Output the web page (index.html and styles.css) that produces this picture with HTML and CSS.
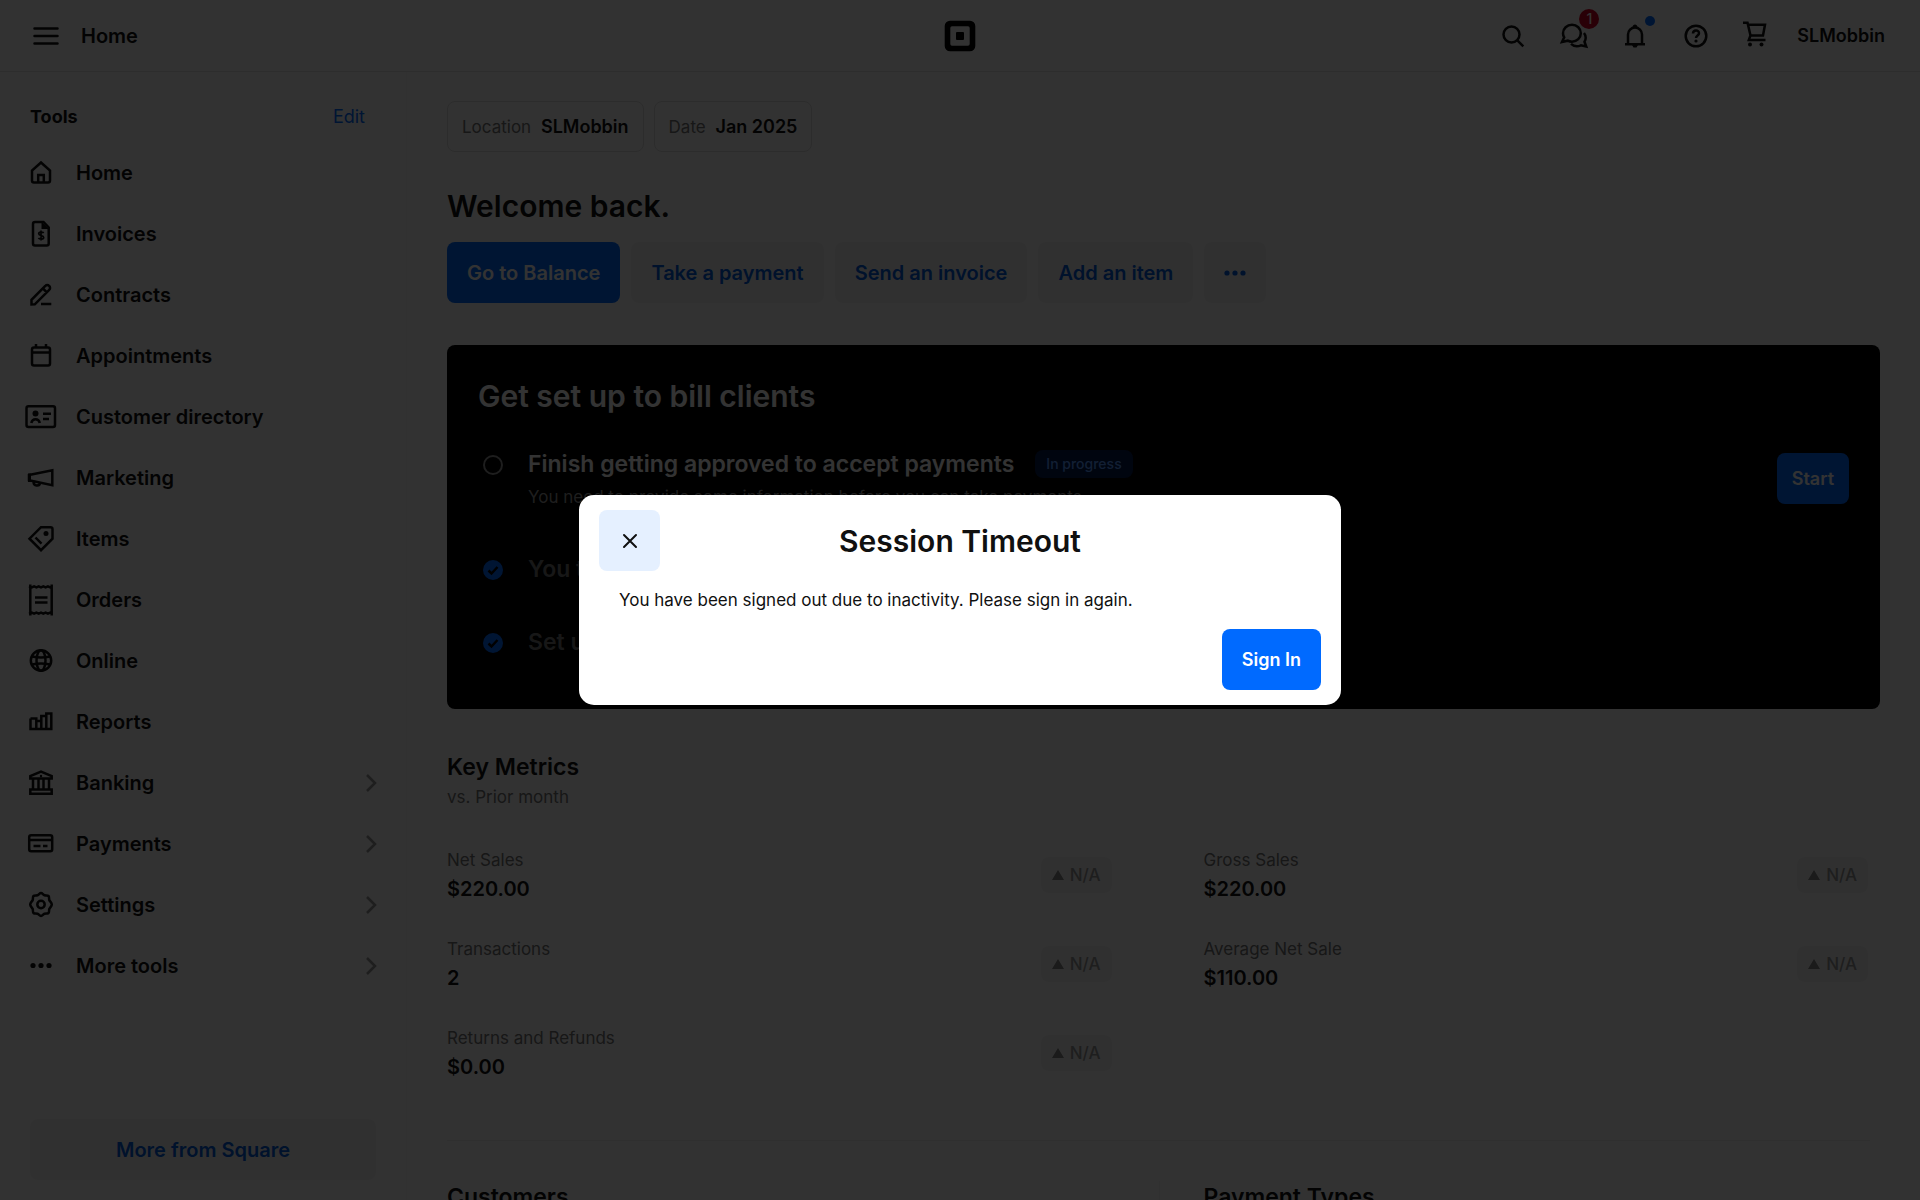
FILE: index.html
```html
<!DOCTYPE html>
<html lang="en">
<head>
  <meta charset="UTF-8" />
  <meta name="viewport" content="width=device-width, initial-scale=1.0" />
  <title>Home</title>
  <link rel="stylesheet" href="styles.css">
</head>
<body>
  <header class="topbar">
    <div class="topbar-left">
      <button class="icon-btn menu-btn" type="button" aria-label="Menu">
        <svg class="icon" viewBox="0 0 32 32"><path d="M4.5 8.5h23M4.5 16h23M4.5 23.5h23" stroke-linecap="round"/></svg>
      </button>
      <span class="page-name">Home</span>
    </div>

    <a class="logo" href="#" aria-label="Square">
      <svg width="32" height="32" viewBox="0 0 32 32"><path fill-rule="evenodd" d="M6 .7h20A5.3 5.3 0 0 1 31.3 6v20a5.3 5.3 0 0 1-5.3 5.3H6A5.3 5.3 0 0 1 .7 26V6A5.3 5.3 0 0 1 6 .7zM8 6.3A1.7 1.7 0 0 0 6.3 8v16A1.7 1.7 0 0 0 8 25.7h16a1.7 1.7 0 0 0 1.7-1.7V8A1.7 1.7 0 0 0 24 6.3zM13 12h6a1 1 0 0 1 1 1v6a1 1 0 0 1-1 1h-6a1 1 0 0 1-1-1v-6a1 1 0 0 1 1-1z"/></svg>
    </a>

    <div class="topbar-right">
      <button class="icon-btn" type="button" aria-label="Search">
        <svg class="icon" viewBox="0 0 32 32"><circle cx="14.5" cy="14.5" r="8"/><path d="M20.3 20.3l6 6"/></svg>
      </button>
      <button class="icon-btn" type="button" aria-label="Messages">
        <svg class="icon" viewBox="0 0 32 32"><path d="M14 4.8c5 0 8.8 3.7 8.8 8.400S19 21.700 14 21.700c-1.600 0-3-.3-4.200-1L4 22l2.200-4.600C5.400 16 5 14.600 5 13.200c0-4.700 4-8.400 9-8.400z"/><path d="M26 13c1.200 1.500 1.700 3 1.700 4.800 0 1.500-.4 2.800-1.200 4l1.700 4.700-5.200-1.200c-3.500 1.600-7.500.8-10-1.500"/></svg>
        <span class="count">1</span>
      </button>
      <button class="icon-btn" type="button" aria-label="Notifications">
        <svg class="icon" viewBox="0 0 32 32"><path d="M6 24.2h20M9 24v-9.500a7 7 0 0 1 14 0V24"/><path class="solid" d="M13 25h6l-1.500 2.500h-3zM13.500 7.500c0-4 5-4 5 0z"/></svg>
        <span class="dot"></span>
      </button>
      <button class="icon-btn" type="button" aria-label="Help">
        <svg class="icon" viewBox="0 0 32 32"><circle cx="16" cy="16" r="10.3"/><path d="M13 13.5c0-4 6-4 6-.3 0 2.300-3 2.300-3 4.800"/><circle class="solid" cx="16" cy="21" r="1.6"/></svg>
      </button>
      <button class="icon-btn" type="button" aria-label="Orders cart">
        <svg class="icon" viewBox="0 0 32 32"><path d="M2 2.800h4.500L9.500 15.500 7.800 20H24.500M7 4.800h17l-2 10.700H9.500"/><circle class="solid" cx="9" cy="24.5" r="2"/><circle class="solid" cx="20.5" cy="24.5" r="2"/></svg>
      </button>
      <a class="account" href="#">SLMobbin</a>
    </div>
  </header>

  <div class="shell">
    <aside class="sidebar">
      <div class="tools-head">
        <strong>Tools</strong>
        <a href="#">Edit</a>
      </div>
      <nav class="tools">
        <a class="tool" href="#">
          <svg class="icon" viewBox="0 0 32 32"><path d="M16 5.5l9 8v10a2 2 0 0 1-2 2H9a2 2 0 0 1-2-2v-10z"/><path d="M13.2 25v-7h5.6v7"/></svg>
          <span>Home</span>
        </a>
        <a class="tool" href="#">
          <svg class="icon" viewBox="0 0 32 32"><path d="M10 4h8.500l5.200 5.500V25.500a2 2 0 0 1-2 2H10a2 2 0 0 1-2-2V6a2 2 0 0 1 2-2z"/><path class="solid" d="M16.500 3.500l7.500 7.500h-7.500z"/><path class="thin" d="M18.700 15c-1-1.300-5-1.200-5 .8 0 2.300 5 1.200 5 3.600 0 2-4 2.200-5.300.6M16 12.500v10"/></svg>
          <span>Invoices</span>
        </a>
        <a class="tool" href="#">
          <svg class="icon" viewBox="0 0 32 32"><path d="M6.5 25.500v-4.700L20.300 7a2.600 2.600 0 0 1 3.900 0 2.600 2.600 0 0 1 0 3.900L9.800 25.300zM18 9.500l3.800 3.800M16 25h10.300"/></svg>
          <span>Contracts</span>
        </a>
        <a class="tool" href="#">
          <svg class="icon" viewBox="0 0 32 32"><path d="M9 7.5h14a2 2 0 0 1 2 2v14a2 2 0 0 1-2 2H9a2 2 0 0 1-2-2v-14a2 2 0 0 1 2-2zM7 12.500h18M11 4v4M21 4v4"/></svg>
          <span>Appointments</span>
        </a>
        <a class="tool" href="#">
          <svg class="icon" viewBox="0 0 32 32"><rect x="1.5" y="5.2" width="28.5" height="20.8" rx="2"/><path d="M18 12.700h8M18 18h6M6.300 22c1-5 7.500-5 8.500 0"/><circle class="solid" cx="10.5" cy="12.5" r="3"/></svg>
          <span>Customer directory</span>
        </a>
        <a class="tool" href="#">
          <svg class="icon" viewBox="0 0 32 32"><path d="M4 13l23.300-4.700v15L4 18.300z"/><path class="solid" d="M3 11.500h3v8.500H3z"/><path d="M8.500 19.500c0 5 6 5 6.500 1.500"/></svg>
          <span>Marketing</span>
        </a>
        <a class="tool" href="#">
          <svg class="icon" viewBox="0 0 32 32"><path d="M16 4.200h9.500a2 2 0 0 1 2 2v9.500L16 27.200 4.500 15.700zM10.500 14.500l6 6.200"/><circle class="solid" cx="21" cy="10.5" r="2.5"/></svg>
          <span>Items</span>
        </a>
        <a class="tool" href="#">
          <svg class="icon" viewBox="0 0 32 32"><path d="M5.300.5v31M26.700.5v31M4 2.300l2.800 1 2.300-1 2.300 1 2.300-1 2.300 1 2.300-1 2.300 1 2.300-1 2.300 1 2-1M4 29.700l2.800-1 2.300 1 2.300-1 2.300 1 2.300-1 2.300 1 2.300-1 2.300 1 2.300-1 2 1M10 13.500h12.500M10 18.500h12.500"/></svg>
          <span>Orders</span>
        </a>
        <a class="tool" href="#">
          <svg class="icon" viewBox="0 0 32 32"><circle cx="16" cy="15.5" r="10.2"/><ellipse cx="16" cy="15.5" rx="4.5" ry="10.2"/><path d="M7 11.500q9 2 18 0M7 19.500q9-2 18 0"/></svg>
          <span>Online</span>
        </a>
        <a class="tool" href="#">
          <svg class="icon" viewBox="0 0 32 32"><path d="M5.500 12.500h5.800V23M11.300 15h5v8M5.500 12.500V23h20.800V7.500h-5V23M16.300 23V10h5"/></svg>
          <span>Reports</span>
        </a>
        <a class="tool" href="#">
          <svg class="icon" viewBox="0 0 32 32"><path d="M5.300 11.500V9L16 4.500 26.700 9v2.500zM5.300 22.500h21.400v4.200H5.300zM8 12v10M13.500 12v10M18.500 12v10M24 12v10"/><circle class="solid" cx="16" cy="9" r="1.2"/></svg>
          <span>Banking</span>
          <svg class="chevron" viewBox="0 0 12 18"><path d="M2 1l8 8-8 8"/></svg>
        </a>
        <a class="tool" href="#">
          <svg class="icon" viewBox="0 0 32 32"><rect x="4.2" y="7.2" width="23" height="16" rx="2"/><path d="M4 12h23M8.500 18h7M18 18h4.500"/></svg>
          <span>Payments</span>
          <svg class="chevron" viewBox="0 0 12 18"><path d="M2 1l8 8-8 8"/></svg>
        </a>
        <a class="tool" href="#">
          <svg class="icon" viewBox="0 0 32 32"><path d="M16 4c1.500 0 2 1.700 3.500 2.200s3-.2 4 .8.300 2.500.8 4 2.500 2.500 2.500 4.500-2 3-2.500 4.500.2 3-.8 4-2.500.3-4 .8-2 2.200-3.500 2.200-2-1.700-3.500-2.200-3 .2-4-.8-.3-2.500-.8-4-2.500-2.500-2.500-4.500 2-3 2.500-4.500-.2-3 .8-4 2.500-.3 4-.8S14.500 4 16 4z"/><circle cx="16" cy="15.5" r="3.7"/></svg>
          <span>Settings</span>
          <svg class="chevron" viewBox="0 0 12 18"><path d="M2 1l8 8-8 8"/></svg>
        </a>
        <a class="tool" href="#">
          <svg class="icon" viewBox="0 0 32 32"><g class="solid"><circle cx="8" cy="15.5" r="2.6"/><circle cx="16" cy="15.5" r="2.6"/><circle cx="24" cy="15.5" r="2.6"/></g></svg>
          <span>More tools</span>
          <svg class="chevron" viewBox="0 0 12 18"><path d="M2 1l8 8-8 8"/></svg>
        </a>
      </nav>
      <button class="btn sidebar-more" type="button">More from Square</button>
    </aside>

    <main class="content">
      <div class="filters">
        <button class="filter" type="button"><span>Location</span> <b>SLMobbin</b></button>
        <button class="filter" type="button"><span>Date</span> <b>Jan 2025</b></button>
      </div>

      <h1 class="welcome">Welcome back.</h1>
      <div class="actions">
        <button class="btn primary" type="button">Go to Balance</button>
        <button class="btn" type="button">Take a payment</button>
        <button class="btn" type="button">Send an invoice</button>
        <button class="btn" type="button">Add an item</button>
        <button class="btn more" type="button" aria-label="More actions">
          <svg width="22" height="6" viewBox="0 0 22 6"><circle cx="3" cy="3" r="2.6"/><circle cx="11" cy="3" r="2.6"/><circle cx="19" cy="3" r="2.6"/></svg>
        </button>
      </div>

      <section class="setup">
        <h2>Get set up to bill clients</h2>
        <div class="step current">
          <svg class="step-mark" viewBox="0 0 22 22"><circle class="ring" cx="11" cy="11" r="9"/></svg>
          <div class="step-text">
            <div class="step-title"><h3>Finish getting approved to accept payments</h3><span class="status">In progress</span></div>
            <p>You need to provide some information before you can take payments.</p>
          </div>
          <button class="btn primary small" type="button">Start</button>
        </div>
        <div class="step done">
          <svg class="step-mark" viewBox="0 0 22 22"><circle cx="11" cy="11" r="10"/><path d="M6.500 11.500l3 3 6-6.500"/></svg>
          <h3>You told us about your business</h3>
        </div>
        <div class="step done">
          <svg class="step-mark" viewBox="0 0 22 22"><circle cx="11" cy="11" r="10"/><path d="M6.500 11.500l3 3 6-6.500"/></svg>
          <h3>Set up your first invoice</h3>
        </div>
      </section>

      <section class="metrics">
        <h3>Key Metrics</h3>
        <p class="muted">vs. Prior month</p>
        <div class="metric-grid">
          <div class="metric">
            <div><span class="muted">Net Sales</span><b>$220.00</b></div>
            <span class="change"><i class="up"></i>N/A</span>
          </div>
          <div class="metric">
            <div><span class="muted">Gross Sales</span><b>$220.00</b></div>
            <span class="change"><i class="up"></i>N/A</span>
          </div>
          <div class="metric">
            <div><span class="muted">Transactions</span><b>2</b></div>
            <span class="change"><i class="up"></i>N/A</span>
          </div>
          <div class="metric">
            <div><span class="muted">Average Net Sale</span><b>$110.00</b></div>
            <span class="change"><i class="up"></i>N/A</span>
          </div>
          <div class="metric">
            <div><span class="muted">Returns and Refunds</span><b>$0.00</b></div>
            <span class="change"><i class="up"></i>N/A</span>
          </div>
        </div>
      </section>

      <section class="reports">
        <h3>Customers</h3>
        <h3>Payment Types</h3>
      </section>
    </main>
  </div>

  <div class="overlay">
    <div class="modal" role="dialog" aria-modal="true" aria-labelledby="modal-title">
      <div class="modal-head">
        <button class="close" type="button" aria-label="Close">
          <svg width="18" height="18" viewBox="0 0 18 18"><path d="M3 3l12 12M15 3L3 15"/></svg>
        </button>
        <h2 id="modal-title">Session Timeout</h2>
      </div>
      <p>You have been signed out due to inactivity. Please sign in again.</p>
      <div class="modal-foot">
        <button class="btn primary signin" type="button">Sign In</button>
      </div>
    </div>
  </div>
</body>
</html>
```
FILE: styles.css
```css
* {
  box-sizing: border-box;
}

body {
  display: flex;
  flex-direction: column;
  height: 100vh;
  margin: 0;
  overflow: hidden;
  background: #fafafa;
  color: #101010;
  font-family: Inter, "Liberation Sans", sans-serif;
  font-size: 17px;
  line-height: 24px;
}

h1, h2, h3, p {
  margin: 0;
}

h1, h2 {
  font-size: 30px;
  line-height: 40px;
  font-weight: 600;
}

h3 {
  font-size: 23px;
  line-height: 32px;
  font-weight: 600;
}

a {
  color: #006aff;
  text-decoration: none;
}

button {
  font-family: inherit;
  cursor: pointer;
}

.icon {
  width: 32px;
  height: 32px;
  flex: none;
  fill: none;
  stroke: #101010;
  stroke-width: 2.5;
}

.icon .solid {
  fill: #101010;
  stroke: none;
}

.icon .thin {
  stroke-width: 1.7;
}

/* Top bar */
.topbar {
  display: grid;
  grid-template-columns: 1fr auto 1fr;
  align-items: center;
  flex: none;
  height: 72px;
  border-bottom: 1px solid #e0e0e0;
}

.topbar-left {
  display: flex;
  align-items: center;
  padding-left: 15px;
}

.page-name {
  font-size: 20px;
  font-weight: 600;
  padding-left: 5px;
}

.logo {
  display: flex;
}

.topbar-right {
  display: flex;
  align-items: center;
  justify-content: flex-end;
  padding-right: 35px;
}

.icon-btn {
  position: relative;
  display: flex;
  align-items: center;
  justify-content: center;
  width: 61px;
  height: 61px;
  padding: 0;
  border: 0;
  background: none;
}

.count {
  position: absolute;
  top: 4px;
  right: 5px;
  width: 20px;
  height: 20px;
  border-radius: 50%;
  background: #cc0023;
  color: #fff;
  font-size: 14px;
  font-weight: 500;
  line-height: 20px;
}

.dot {
  position: absolute;
  top: 11px;
  right: 10px;
  width: 10px;
  height: 10px;
  border-radius: 50%;
  background: #006aff;
}

.account {
  padding-left: 10px;
  color: #101010;
  font-size: 18px;
  font-weight: 600;
}

/* Sidebar */
.shell {
  display: flex;
  flex: 1;
  min-height: 0;
}

.sidebar {
  display: flex;
  flex-direction: column;
  flex: none;
  width: 407px;
  padding-bottom: 20px;
  border-right: 1px solid #f2f2f2;
}

.tools-head {
  display: flex;
  justify-content: space-between;
  padding: 33px 41px 13px 30px;
  font-size: 18px;
}

.tools-head strong {
  font-weight: 700;
}

.tool {
  display: flex;
  align-items: center;
  gap: 19px;
  height: 61px;
  padding: 0 29px 0 25px;
  color: #101010;
  font-size: 20px;
  font-weight: 600;
}

.chevron {
  width: 12px;
  height: 18px;
  margin-left: auto;
  fill: none;
  stroke: #959595;
  stroke-width: 2.5;
}

.btn {
  height: 61px;
  padding: 0 20px;
  border: 0;
  border-radius: 8px;
  background: #f0f0f0;
  color: #005ad9;
  font-size: 20px;
  font-weight: 600;
}

.btn.primary {
  background: #006aff;
  color: #fff;
}

.btn.small {
  height: 51px;
  padding: 0 15px;
  font-size: 18px;
}

.sidebar-more {
  margin: auto 30px 0;
}

/* Main column */
.content {
  flex: 1;
  min-width: 0;
  padding: 29px 40px 0;
  overflow: hidden;
}

.filters {
  display: flex;
  gap: 10px;
}

.filter {
  height: 51px;
  padding: 0 14px;
  border: 1px solid #dadada;
  border-radius: 8px;
  background: none;
  color: #101010;
  font-size: 17px;
}

.filter span {
  padding-right: 5px;
  color: #737373;
}

.filter b {
  font-size: 18px;
  font-weight: 600;
}

.welcome {
  margin: 34px 0 16px;
}

.actions {
  display: flex;
  gap: 11px;
}

.actions svg {
  display: block;
  fill: #005ad9;
}

.setup {
  margin-top: 42px;
  padding: 31px 31px 51px;
  border-radius: 8px;
  background: #000;
  color: #fff;
}

.step {
  display: flex;
  align-items: flex-start;
  margin-top: 41px;
}

.step.current {
  margin-top: 32px;
  padding-bottom: 3px;
}

.step-mark {
  flex: none;
  width: 22px;
  height: 22px;
  margin: 6px 24px 0 4px;
  fill: #006aff;
}

.step-mark .ring {
  fill: none;
  stroke: #959595;
  stroke-width: 2;
}

.step-mark path {
  fill: none;
  stroke: #000;
  stroke-width: 2.5;
}

.step-text {
  flex: 1;
}

.step-title {
  display: flex;
  align-items: center;
}

.status {
  margin-left: 21px;
  padding: 0 11px;
  border-radius: 8px;
  background: #001a4d;
  color: #5b9bff;
  font-size: 14px;
  font-weight: 500;
  line-height: 28px;
}

.step p {
  margin-top: 5px;
  color: #959595;
}

.step .small {
  margin-top: 5px;
}

.step.done h3 {
  color: #737373;
}

/* Metrics */
.muted {
  color: #737373;
}

.metrics {
  margin: 42px 10px 0 0;
  padding-bottom: 43px;
  border-bottom: 1px solid #ececec;
}

.metrics p {
  margin-top: 2px;
}

.metric-grid {
  display: grid;
  grid-template-columns: 1fr 1fr;
  column-gap: 90px;
  margin-top: 21px;
}

.metric {
  display: flex;
  align-items: center;
  justify-content: space-between;
  height: 89px;
  padding-right: 2px;
}

.metric b {
  display: block;
  padding-top: 5px;
  font-size: 20px;
  font-weight: 600;
}

.change {
  display: flex;
  align-items: center;
  gap: 6px;
  height: 36px;
  padding: 0 11px;
  border-radius: 8px;
  background: #f0f0f0;
  color: #959595;
  font-weight: 500;
}

.up {
  border: 6px solid transparent;
  border-top: 0;
  border-bottom: 10px solid #868686;
}

.reports {
  display: grid;
  grid-template-columns: 1fr 1fr;
  margin-right: 10px;
  padding-top: 40px;
}

.reports h3 + h3 {
  padding-left: 44px;
  border-left: 1px solid #f0f0f0;
}

/* Session modal */
.overlay {
  position: fixed;
  inset: 0;
  display: flex;
  align-items: center;
  justify-content: center;
  background: rgba(0, 0, 0, 0.8);
}

.modal {
  width: 762px;
  max-width: 90%;
  padding: 15px 20px;
  border-radius: 15px;
  background: #fff;
}

.modal-head {
  display: grid;
  grid-template-columns: 61px 1fr 61px;
  align-items: center;
  text-align: center;
}

.close {
  display: flex;
  align-items: center;
  justify-content: center;
  height: 61px;
  padding: 0;
  border: 0;
  border-radius: 8px;
  background: #e5f0ff;
}

.close svg {
  fill: none;
  stroke: #101010;
  stroke-width: 2;
  stroke-linecap: round;
}

.modal p {
  padding: 17px 20px;
}

.modal-foot {
  display: flex;
  justify-content: flex-end;
}

.signin {
  font-size: 18px;
}
```
